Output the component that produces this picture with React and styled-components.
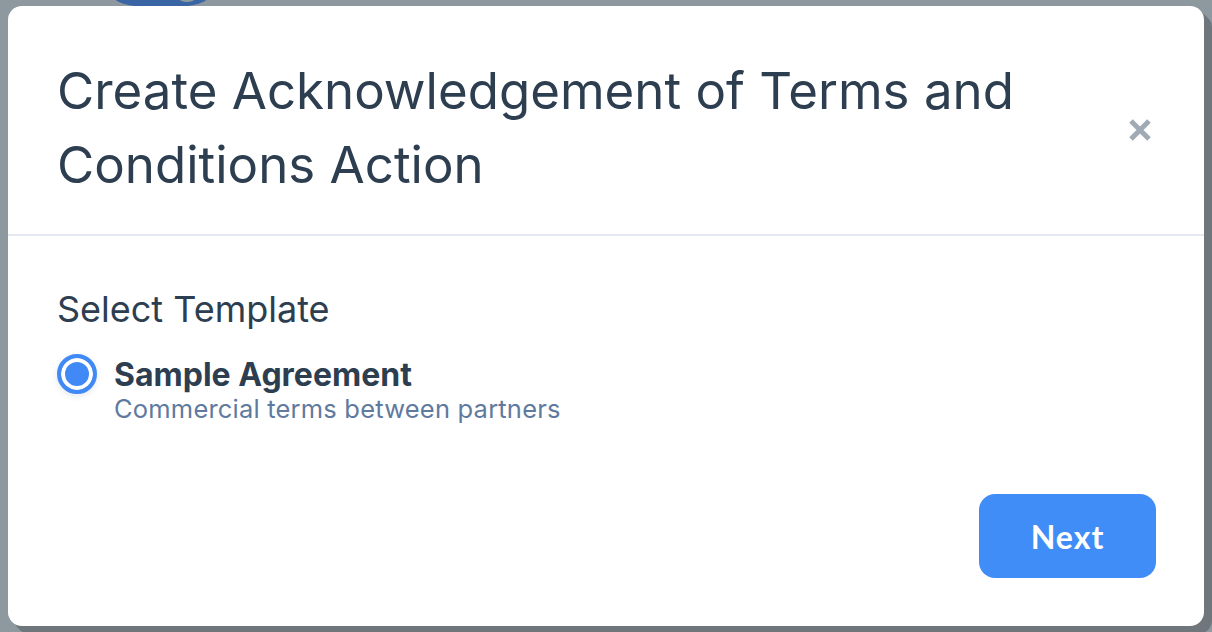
import styled, { createGlobalStyle } from "styled-components";

const GlobalStyle = createGlobalStyle`
  html, body {
    margin: 0;
    padding: 0;
    height: 100%;
  }
  body {
    font-family: Inter, "Noto Sans", sans-serif;
    background: #8e989f;
    overflow: hidden;
  }
`;

const Page = styled.div`
  position: relative;
  width: 1212px;
  height: 632px;
  background: #8e989f;
  overflow: hidden;
`;

// avatar of the page behind the overlay, peeking above the dialog
const Avatar = styled.div`
  position: absolute;
  left: 115px;
  top: -6px;
  width: 92px;
  height: 14px;
  border-radius: 0 0 46px 46px / 0 0 10px 10px;
  background: #3a65a5;
  &::after {
    content: "";
    position: absolute;
    left: 56px;
    top: -28px;
    width: 32px;
    height: 36px;
    border-radius: 50%;
    background: #8e989f;
  }
`;

const Overlay = styled.div`
  position: relative;
  z-index: 1;
  height: 100%;
  padding: 6px 8px;
  box-sizing: border-box;
`;

const Modal = styled.div`
  display: flex;
  flex-direction: column;
  height: 620px;
  background: #ffffff;
  border-radius: 14px;
  box-shadow: 6px 6px 0 0 #6f767c, 8px 8px 0 0 #6f767c;
  overflow: hidden;
`;

const Header = styled.div`
  display: flex;
  align-items: center;
  justify-content: space-between;
  height: 230px;
  padding: 16px 48px 0 49px;
  border-bottom: 2px solid #e5e9f2;
  box-sizing: border-box;
`;

const Title = styled.h1`
  margin: 0;
  max-width: 1040px;
  font-family: Inter, sans-serif;
  font-size: 51px;
  font-weight: 400;
  line-height: 74px;
  color: #2d3e50;
`;

const Close = styled.button`
  display: flex;
  align-items: center;
  justify-content: center;
  margin-top: 4px;
  margin-right: 4px;
  padding: 0;
  border: none;
  background: none;
  cursor: pointer;
`;

const Body = styled.div`
  display: flex;
  flex-direction: column;
  flex: 1;
  padding: 51px 48px 48px 49px;
`;

const Label = styled.div`
  font-size: 36px;
  line-height: 44px;
  color: #2d3e50;
`;

const Option = styled.label`
  display: flex;
  align-items: flex-start;
  gap: 17px;
  margin-top: 24px;
  cursor: pointer;
`;

const Radio = styled.span`
  flex: none;
  width: 40px;
  height: 40px;
  margin-top: -1px;
  box-sizing: border-box;
  border-radius: 50%;
  border: 4px solid #418af6;
  background: #418af6;
  box-shadow: inset 0 0 0 4px #ffffff, 0 2px 6px rgba(45, 62, 80, 0.12);
`;

const OptionText = styled.div`
  display: flex;
  flex-direction: column;
`;

const OptionTitle = styled.span`
  font-size: 32px;
  font-weight: 700;
  line-height: 40px;
  color: #2d3e50;
`;

const OptionSub = styled.span`
  font-size: 25.5px;
  line-height: 28px;
  color: #5f7a9e;
  letter-spacing: 0.2px;
`;

const Footer = styled.div`
  display: flex;
  justify-content: flex-end;
  margin-top: auto;
`;

const Button = styled.button`
  width: 177px;
  height: 84px;
  border: none;
  border-radius: 16px;
  background: #418df7;
  color: #ffffff;
  font-family: Lato, Inter, sans-serif;
  font-size: 32px;
  font-weight: 700;
  letter-spacing: 1px;
  cursor: pointer;
`;

const App = () => {
  return (
    <>
      <GlobalStyle />
      <Page>
        <Avatar />
        <Overlay>
          <Modal>
            <Header>
              <Title>Create Acknowledgement of Terms and Conditions Action</Title>
              <Close aria-label="Close">
                <svg width="24" height="24" viewBox="0 0 24 24">
                  <path
                    d="M3 3 L21 21 M21 3 L3 21"
                    stroke="#a0aab4"
                    strokeWidth="5"
                    strokeLinecap="butt"
                  />
                </svg>
              </Close>
            </Header>
            <Body>
              <Label>Select Template</Label>
              <Option>
                <Radio />
                <OptionText>
                  <OptionTitle>Sample Agreement</OptionTitle>
                  <OptionSub>Commercial terms between partners</OptionSub>
                </OptionText>
              </Option>
              <Footer>
                <Button>Next</Button>
              </Footer>
            </Body>
          </Modal>
        </Overlay>
      </Page>
    </>
  );
};

export default App;
